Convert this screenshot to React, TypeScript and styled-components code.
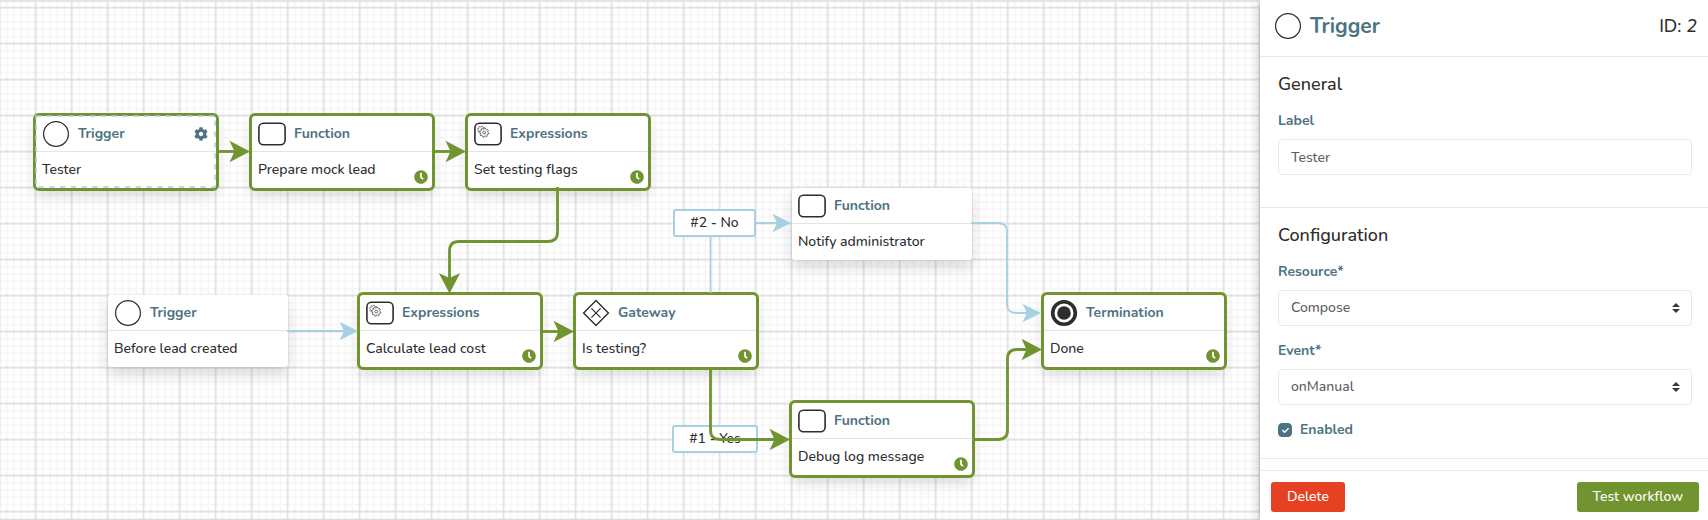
import React from 'react';
import styled, { createGlobalStyle } from 'styled-components';
import { FaCheck, FaClock, FaCog } from 'react-icons/fa';

const color = {
  green: '#719430',
  blue: '#a7d0e3',
  slate: '#4d7281',
  ink: '#2d2d2d',
  field: '#5a5f66',
  line: '#e4e9ef',
  red: '#e54122',
};

const GlobalStyle = createGlobalStyle`
  *, *::before, *::after { box-sizing: border-box; }
  body {
    margin: 0;
    background: #fff;
    color: ${color.ink};
    font-family: Nunito, Lato, sans-serif;
    font-size: 14px;
    font-weight: 500;
    line-height: 20px;
  }
  button, input, select { font: inherit; }
  h1, h2, p { margin: 0; }
`;

const Page = styled.div`
  display: grid;
  grid-template-columns: minmax(0, 1fr) 448px;
  min-height: 100vh;
`;

const Canvas = styled.main`
  position: relative;
  overflow: hidden;
  border-top: 2px solid #e2e6ea;
  border-bottom: 1px solid #d9dbe0;
`;

/* The diagram's origin is the page's top left corner, under the canvas border. */
const Stage = styled.div`
  position: absolute;
  inset: -2px 0 0 0;
`;

const Layer = styled.svg`
  position: absolute;
  inset: 0;
  width: 100%;
  height: 100%;
  pointer-events: none;
`;

const Node = styled.article<{ $x: number; $y: number; $done: boolean }>`
  position: absolute;
  left: ${p => p.$x}px;
  top: ${p => p.$y}px;
  width: 180px;
  height: 72px;
  display: grid;
  grid-template-rows: 36px 36px;
  background: #fff;
  border-radius: 3px;
  box-shadow: 0 7px 14px rgba(0, 0, 0, 0.15);
  outline: ${p => (p.$done ? `3px solid ${color.green}` : 'none')};
`;

const NodeHead = styled.header`
  display: flex;
  align-items: center;
  gap: 8px;
  padding: 0 8px 0 6px;
  border-bottom: 1px solid #e1e3e5;
`;

const NodeTitle = styled.h2`
  flex: 1;
  color: ${color.slate};
  font-size: 14px;
  font-weight: 700;
`;

const NodeText = styled.p`
  padding: 8px 6px;
`;

const GearButton = styled.button`
  display: flex;
  padding: 0;
  border: 0;
  background: none;
  color: ${color.slate};
`;

const Badge = styled.span`
  position: absolute;
  right: 4px;
  bottom: 4px;
  display: flex;
  color: ${color.green};
`;

const EdgeLabel = styled.span<{ $x: number; $y: number; $width: number }>`
  position: absolute;
  left: ${p => p.$x}px;
  top: ${p => p.$y}px;
  width: ${p => p.$width}px;
  height: 28px;
  display: flex;
  align-items: center;
  justify-content: center;
  background: #fff;
  border: 2px solid ${color.blue};
  border-radius: 3px;
`;

const Sidebar = styled.aside`
  position: relative;
  display: flex;
  flex-direction: column;
  background: #fff;
  box-shadow: 0 2px 10px rgba(0, 0, 0, 0.3);
`;

const SidebarHead = styled.header`
  display: flex;
  align-items: center;
  gap: 8px;
  height: 57px;
  padding: 0 11px 4px 14px;
  border-bottom: 1px solid ${color.line};
`;

const SidebarTitle = styled.h1`
  flex: 1;
  color: ${color.slate};
  font-size: 21px;
  font-weight: 700;
`;

const NodeId = styled.p`
  font-size: 18px;
`;

const Section = styled.section`
  display: flex;
  flex-direction: column;
  gap: 15px;
  padding: 16px 16px 18px 18px;
  border-bottom: 1px solid ${color.line};
`;

const GeneralSection = styled(Section)`
  padding-bottom: 32px;
`;

const SectionTitle = styled.h2`
  font-size: 18px;
  font-weight: 500;
  line-height: 23px;
`;

const Field = styled.div`
  display: flex;
  flex-direction: column;
  gap: 8px;
`;

const FieldLabel = styled.label`
  color: ${color.slate};
  font-weight: 700;
`;

const TextInput = styled.input`
  width: 100%;
  height: 36px;
  padding: 0 12px;
  border: 1px solid ${color.line};
  border-radius: 4px;
  background: #fff;
  color: ${color.field};
`;

const SelectWrap = styled.div`
  display: grid;
  align-items: center;

  > * { grid-area: 1 / 1; }
`;

const Select = styled.select`
  appearance: none;
  width: 100%;
  height: 36px;
  padding: 0 32px 0 12px;
  border: 1px solid ${color.line};
  border-radius: 4px;
  background: #fff;
  color: ${color.field};
`;

const SelectArrows = styled.svg`
  justify-self: end;
  margin-right: 12px;
  pointer-events: none;
`;

const CheckRow = styled.div`
  display: flex;
  align-items: center;
  gap: 8px;
`;

const CheckWrap = styled.span`
  display: grid;
  place-items: center;
  color: #fff;

  > * { grid-area: 1 / 1; }
  > svg { pointer-events: none; }
`;

const Checkbox = styled.input`
  appearance: none;
  width: 14px;
  height: 14px;
  margin: 0;
  border: 1px solid ${color.slate};
  border-radius: 4px;
  background: #fff;

  &:checked { background: ${color.slate}; }
`;

const SidebarFoot = styled.footer`
  display: flex;
  align-items: center;
  justify-content: space-between;
  height: 50px;
  margin-top: auto;
  padding: 3px 9px 0 11px;
  border-top: 1px solid ${color.line};
`;

const Button = styled.button<{ $color: string }>`
  height: 30px;
  padding: 0 16px;
  border: 0;
  border-radius: 3px;
  background: ${p => p.$color};
  color: #fff;
`;

type Kind = 'Trigger' | 'Function' | 'Expressions' | 'Gateway' | 'Termination';

/* Outline of a gear with eight square teeth, centred on the origin. */
const gear = Array.from({ length: 32 }, (_, i) => {
  const a = (i / 32) * Math.PI * 2 + 0.1;
  const r = Math.floor(i / 2) % 2 ? 3.6 : 4.7;
  return `${(Math.cos(a) * r).toFixed(2)},${(Math.sin(a) * r).toFixed(2)}`;
}).join(' ');

function KindIcon({ kind }: { kind: Kind }) {
  return (
    <svg width="28" height="28" viewBox="0 0 28 28" fill="none" stroke={color.ink} strokeWidth="1.4" aria-hidden="true">
      {kind === 'Trigger' && <circle cx="14" cy="14" r="12.4" strokeWidth="1.2" />}
      {(kind === 'Function' || kind === 'Expressions') && (
        <rect x="0.9" y="3.3" width="26.2" height="21.4" rx="4.5" strokeWidth="1.6" />
      )}
      {kind === 'Expressions' && (
        <g strokeWidth="0.7">
          <polygon points={gear} transform="translate(7.3 9.8) scale(.8)" />
          <polygon points={gear} transform="translate(10.2 12.6)" fill="#fff" />
          <circle cx="10.2" cy="12.6" r="1.4" />
        </g>
      )}
      {kind === 'Gateway' && (
        <>
          <path d="M14 1.6 26.4 14 14 26.4 1.6 14Z" strokeWidth="1.4" />
          <path d="m9.4 9.4 9.2 9.2m0-9.2-9.2 9.2" strokeWidth="1.2" />
        </>
      )}
      {kind === 'Termination' && (
        <>
          <circle cx="14" cy="14" r="11.3" strokeWidth="3.6" />
          <circle cx="14" cy="14" r="6.8" fill={color.ink} stroke="none" />
        </>
      )}
    </svg>
  );
}

interface Step {
  kind: Kind;
  text: string;
  x: number;
  y: number;
  done?: boolean;
  selected?: boolean;
}

const steps: Step[] = [
  { kind: 'Trigger', text: 'Tester', x: 36, y: 116, done: true, selected: true },
  { kind: 'Function', text: 'Prepare mock lead', x: 252, y: 116, done: true },
  { kind: 'Expressions', text: 'Set testing flags', x: 468, y: 116, done: true },
  { kind: 'Function', text: 'Notify administrator', x: 792, y: 188 },
  { kind: 'Trigger', text: 'Before lead created', x: 108, y: 295 },
  { kind: 'Expressions', text: 'Calculate lead cost', x: 360, y: 295, done: true },
  { kind: 'Gateway', text: 'Is testing?', x: 576, y: 295, done: true },
  { kind: 'Function', text: 'Debug log message', x: 792, y: 403, done: true },
  { kind: 'Termination', text: 'Done', x: 1044, y: 295, done: true },
];

const idleEdges = [
  'M287 331H345',
  'M710.5 293V223H778',
  'M971 223H998Q1007 223 1007 232V304Q1007 313 1016 313H1028',
];
const idleTips = [[358, 331], [791, 223], [1041, 313]];

const doneEdges = [
  'M216 151.5H237',
  'M432 151.5H453',
  'M557.5 187V232Q557.5 241.5 548 241.5H459Q449.5 241.5 449.5 251V280',
  'M540 331.5H561',
  'M710.5 367V430Q710.5 439.5 720 439.5H777',
  'M972 439.5H998Q1007.5 439.5 1007.5 430V359Q1007.5 349.5 1017 349.5H1029',
];
const doneTips = [
  [250, 151.5, 0],
  [466, 151.5, 0],
  [449.5, 293.5, 90],
  [574, 331.5, 0],
  [790, 439.5, 0],
  [1042, 349.5, 0],
];

function StepNode({ step }: { step: Step }) {
  return (
    <Node $x={step.x} $y={step.y} $done={!!step.done}>
      <NodeHead>
        <KindIcon kind={step.kind} />
        <NodeTitle>{step.kind}</NodeTitle>
        {step.selected && (
          <GearButton type="button" aria-label="Configure step">
            <FaCog size={14} />
          </GearButton>
        )}
      </NodeHead>
      <NodeText>{step.text}</NodeText>
      {step.done && !step.selected && (
        <Badge>
          <FaClock size={14} />
        </Badge>
      )}
    </Node>
  );
}

function UpDown() {
  return (
    <SelectArrows width="8" height="10" viewBox="0 0 4 5" aria-hidden="true">
      <path fill="#343a40" d="M2 0 0 2h4zm0 5L0 3h4z" />
    </SelectArrows>
  );
}

export default function App() {
  const selected = steps.filter(step => step.selected);
  return (
    <Page>
      <GlobalStyle />
      <Canvas>
        <Stage>
          <Layer aria-hidden="true">
            <defs>
              <pattern id="grid" x="-0.4" y="7.6" width="36" height="36" viewBox="0 0 180 180" patternUnits="userSpaceOnUse">
                <path
                  d="M36 0V180M72 0V180M108 0V180M144 0V180M0 36H180M0 72H180M0 108H180M0 144H180"
                  stroke="#000"
                  strokeOpacity="0.045"
                  strokeWidth="6"
                />
                <path d="M0 0V180M180 0V180M0 0H180M0 180H180" stroke="#000" strokeOpacity="0.14" strokeWidth="7" />
              </pattern>
            </defs>
            <rect width="100%" height="100%" fill="url(#grid)" />
          </Layer>
          {steps.map(step => (
            <StepNode key={step.text} step={step} />
          ))}
          <Layer aria-hidden="true">
            {idleEdges.map(d => (
              <path key={d} d={d} fill="none" stroke={color.blue} strokeWidth="1.8" />
            ))}
            {idleTips.map(([x, y]) => (
              <path key={`${x}-${y}`} d="M0 0-18.5-9.2-14-0-18.5 9.2Z" fill={color.blue} transform={`translate(${x} ${y})`} />
            ))}
            {selected.map(({ text, x, y }) => (
              <rect
                key={text}
                x={x}
                y={y}
                width="179"
                height="71"
                fill="none"
                stroke={color.blue}
                strokeWidth="1.5"
                strokeDasharray="5.4 5.4"
              />
            ))}
          </Layer>
          <EdgeLabel $x={673} $y={209} $width={83}>#2 - No</EdgeLabel>
          <EdgeLabel $x={672} $y={425} $width={86}>#1 - Yes</EdgeLabel>
          <Layer aria-hidden="true">
            {doneEdges.map(d => (
              <path key={d} d={d} fill="none" stroke={color.green} strokeWidth="2.8" />
            ))}
            {doneTips.map(([x, y, turn]) => (
              <path
                key={`${x}-${y}`}
                d="M0 0-20.5-10.7-15.5 0-20.5 10.7Z"
                fill={color.green}
                transform={`translate(${x} ${y}) rotate(${turn})`}
              />
            ))}
          </Layer>
        </Stage>
      </Canvas>

      <Sidebar>
        <SidebarHead>
          <KindIcon kind="Trigger" />
          <SidebarTitle>Trigger</SidebarTitle>
          <NodeId>
            ID: <em>2</em>
          </NodeId>
        </SidebarHead>

        <GeneralSection>
          <SectionTitle>General</SectionTitle>
          <Field>
            <FieldLabel htmlFor="label">Label</FieldLabel>
            <TextInput id="label" type="text" defaultValue="Tester" />
          </Field>
        </GeneralSection>

        <Section>
          <SectionTitle>Configuration</SectionTitle>
          <Field>
            <FieldLabel htmlFor="resource">Resource*</FieldLabel>
            <SelectWrap>
              <Select id="resource" defaultValue="Compose">
                <option>Compose</option>
              </Select>
              <UpDown />
            </SelectWrap>
          </Field>
          <Field>
            <FieldLabel htmlFor="event">Event*</FieldLabel>
            <SelectWrap>
              <Select id="event" defaultValue="onManual">
                <option>onManual</option>
              </Select>
              <UpDown />
            </SelectWrap>
          </Field>
          <CheckRow>
            <CheckWrap>
              <Checkbox id="enabled" type="checkbox" defaultChecked />
              <FaCheck size={7} />
            </CheckWrap>
            <FieldLabel htmlFor="enabled">Enabled</FieldLabel>
          </CheckRow>
        </Section>

        <SidebarFoot>
          <Button type="button" $color={color.red}>Delete</Button>
          <Button type="button" $color={color.green}>Test workflow</Button>
        </SidebarFoot>
      </Sidebar>
    </Page>
  );
}
